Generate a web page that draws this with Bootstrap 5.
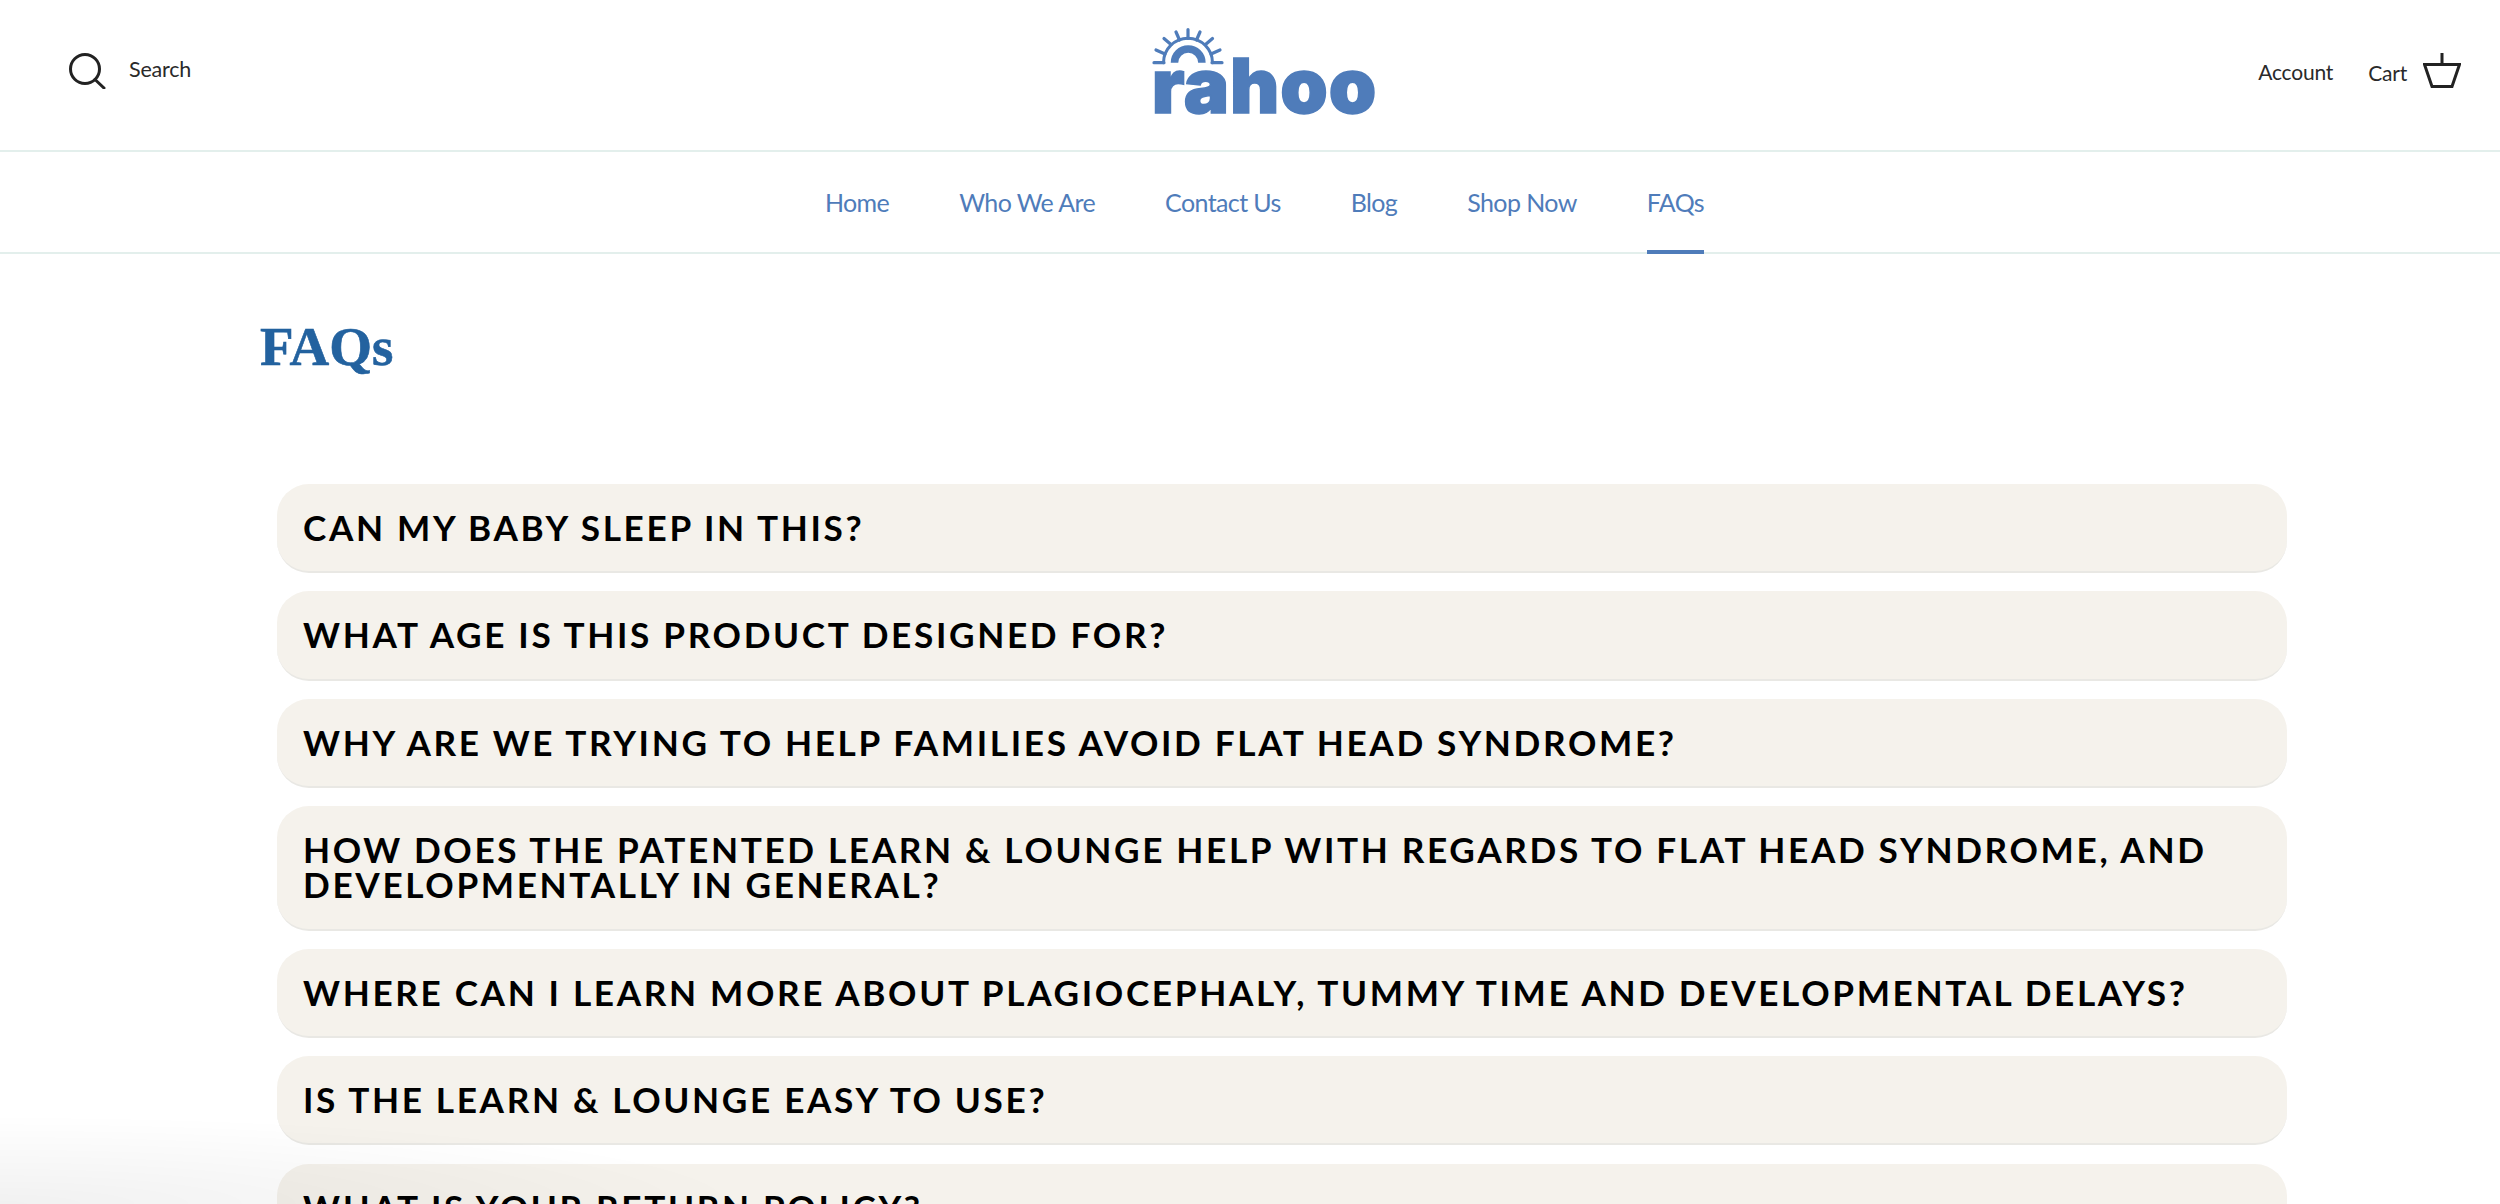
<!DOCTYPE html>
<html lang="en">
<head>
    <meta charset="UTF-8">
    <title>FAQs</title>
    <link href="https://cdn.jsdelivr.net/npm/bootstrap@5.3.0/dist/css/bootstrap.min.css" rel="stylesheet">
    <style>
        html, body { height: 1204px; overflow: hidden; background: #fff; }
        .top-row { display: grid; grid-template-columns: 1fr auto 1fr; height: 152px; padding: 0 39px 8px 68px; border-bottom: 2px solid #e3efec; }
        .util-link { font-family: Lato, sans-serif; font-weight: 400; font-size: 21px; letter-spacing: -.2px; color: #2a2a2a; text-decoration: none; }
        .search-link { gap: 23px; }
        .search-link span { margin-bottom: 4px; font-size: 21.5px; }
        .right-links { gap: 35px; margin-top: 2px; }
        .cart-link { gap: 16px; }
        .cart-link span { margin-top: 2px; }
        .cart-icon { margin-bottom: 4px; }
        .logo-sun { display: block; margin-left: -8px; }
        .logo-word { font-family: Inter, sans-serif; font-weight: 900; font-size: 76px; line-height: 1; letter-spacing: 1px; margin-top: -19px; color: #4f7cba; -webkit-text-stroke: 1.5px #4f7cba; }
        .main-nav { height: 102px; padding: 0 39px 0 68px; border-bottom: 2px solid #e3efec; gap: 70px; }
        .main-nav a { display: flex; align-items: center; height: 102px; padding-top: 4px; font-family: Lato, sans-serif; font-size: 25px; letter-spacing: -.6px; color: #4f7cba; text-decoration: none; border-bottom: 4px solid transparent; }
        .main-nav a.on { border-bottom-color: #4f7cba; }
        .faq-title { font-family: "Liberation Serif", serif; font-weight: 700; font-size: 55px; color: #23629f; -webkit-text-stroke: .6px #23629f; margin: 0; padding: 60px 0 0 260px; line-height: 66px; }
        .faq-list { padding: 104px 213px 0 277px; }
        .faq-row { background: #f5f2ec; border-radius: 32px; border-bottom: 2px solid #e9e8e4; padding: 26px 26px 26px; margin-bottom: 18.2px; font-family: Lato, sans-serif; font-weight: 700; font-size: 35.2px; line-height: 35.2px; letter-spacing: 2.65px; color: #000; text-transform: uppercase; }
        .corner-glow { position: fixed; left: 0; bottom: 0; width: 760px; height: 90px; pointer-events: none; background: radial-gradient(ellipse at bottom left, rgba(0,0,0,.055), rgba(0,0,0,0) 70%); }
    </style>
</head>
<body>
    <header class="top-row align-items-center">
        <a href="#" class="util-link search-link d-flex align-items-center">
            <svg width="38" height="36" viewBox="0 0 38 36" fill="none" stroke="#222" stroke-width="3"><circle cx="17" cy="16" r="14.5"/><path d="M27 26.500l9 8.500" stroke-linecap="round"/></svg>
            <span>Search</span>
        </a>
        <a href="#" class="d-flex flex-column align-items-start text-decoration-none">
            <svg class="logo-sun" width="90" height="46" viewBox="0 0 90 46" fill="none" stroke="#4f7cba" stroke-linecap="round">
                <path d="M10 42.700h10M68 42.700h10" stroke-width="3.200"/>
                <path d="M19.500 42.700a24.500 24.500 0 0 1 49 0" stroke-width="3"/>
                <path d="M30.500 42.700a13.700 13.700 0 0 1 27.400 0" stroke-width="7.500" stroke-linecap="butt"/>
                <path d="M44 9.500v9M32 12l3.500 8M56 12l-3.500 8M20 18.500l7 6M68.500 18.500l-7 6M12 30l9 4M76 30l-9 4" stroke-width="3.200"/>
            </svg>
            <span class="logo-word">rahoo</span>
        </a>
        <div class="right-links d-flex justify-content-end align-items-center">
            <a href="#" class="util-link">Account</a>
            <a href="#" class="util-link cart-link d-flex align-items-center">
                <span>Cart</span>
                <svg class="cart-icon" width="38" height="36" viewBox="0 0 38 36" fill="none" stroke="#222" stroke-width="3"><path d="M1.500 12.500h35l-7.500 22H9zM19 1v11.500"/></svg>
            </a>
        </div>
    </header>
    <nav class="main-nav d-flex justify-content-center align-items-start">
        <a href="#">Home</a>
        <a href="#">Who We Are</a>
        <a href="#">Contact Us</a>
        <a href="#">Blog</a>
        <a href="#">Shop Now</a>
        <a href="#" class="on">FAQs</a>
    </nav>
    <main>
        <h1 class="faq-title">FAQs</h1>
        <div class="faq-list">
            <div class="faq-row">Can my baby sleep in this?</div>
            <div class="faq-row">What age is this product designed for?</div>
            <div class="faq-row">Why are we trying to help families avoid flat head syndrome?</div>
            <div class="faq-row">How does the patented Learn &amp; Lounge help with regards to flat head syndrome, and developmentally in general?</div>
            <div class="faq-row">Where can I learn more about plagiocephaly, tummy time and developmental delays?</div>
            <div class="faq-row">Is the Learn &amp; Lounge easy to use?</div>
            <div class="faq-row">What is your return policy?</div>
        </div>
    </main>
    <div class="corner-glow"></div>
    <script src="https://cdn.jsdelivr.net/npm/bootstrap@5.3.0/dist/js/bootstrap.bundle.min.js"></script>
</body>
</html>
